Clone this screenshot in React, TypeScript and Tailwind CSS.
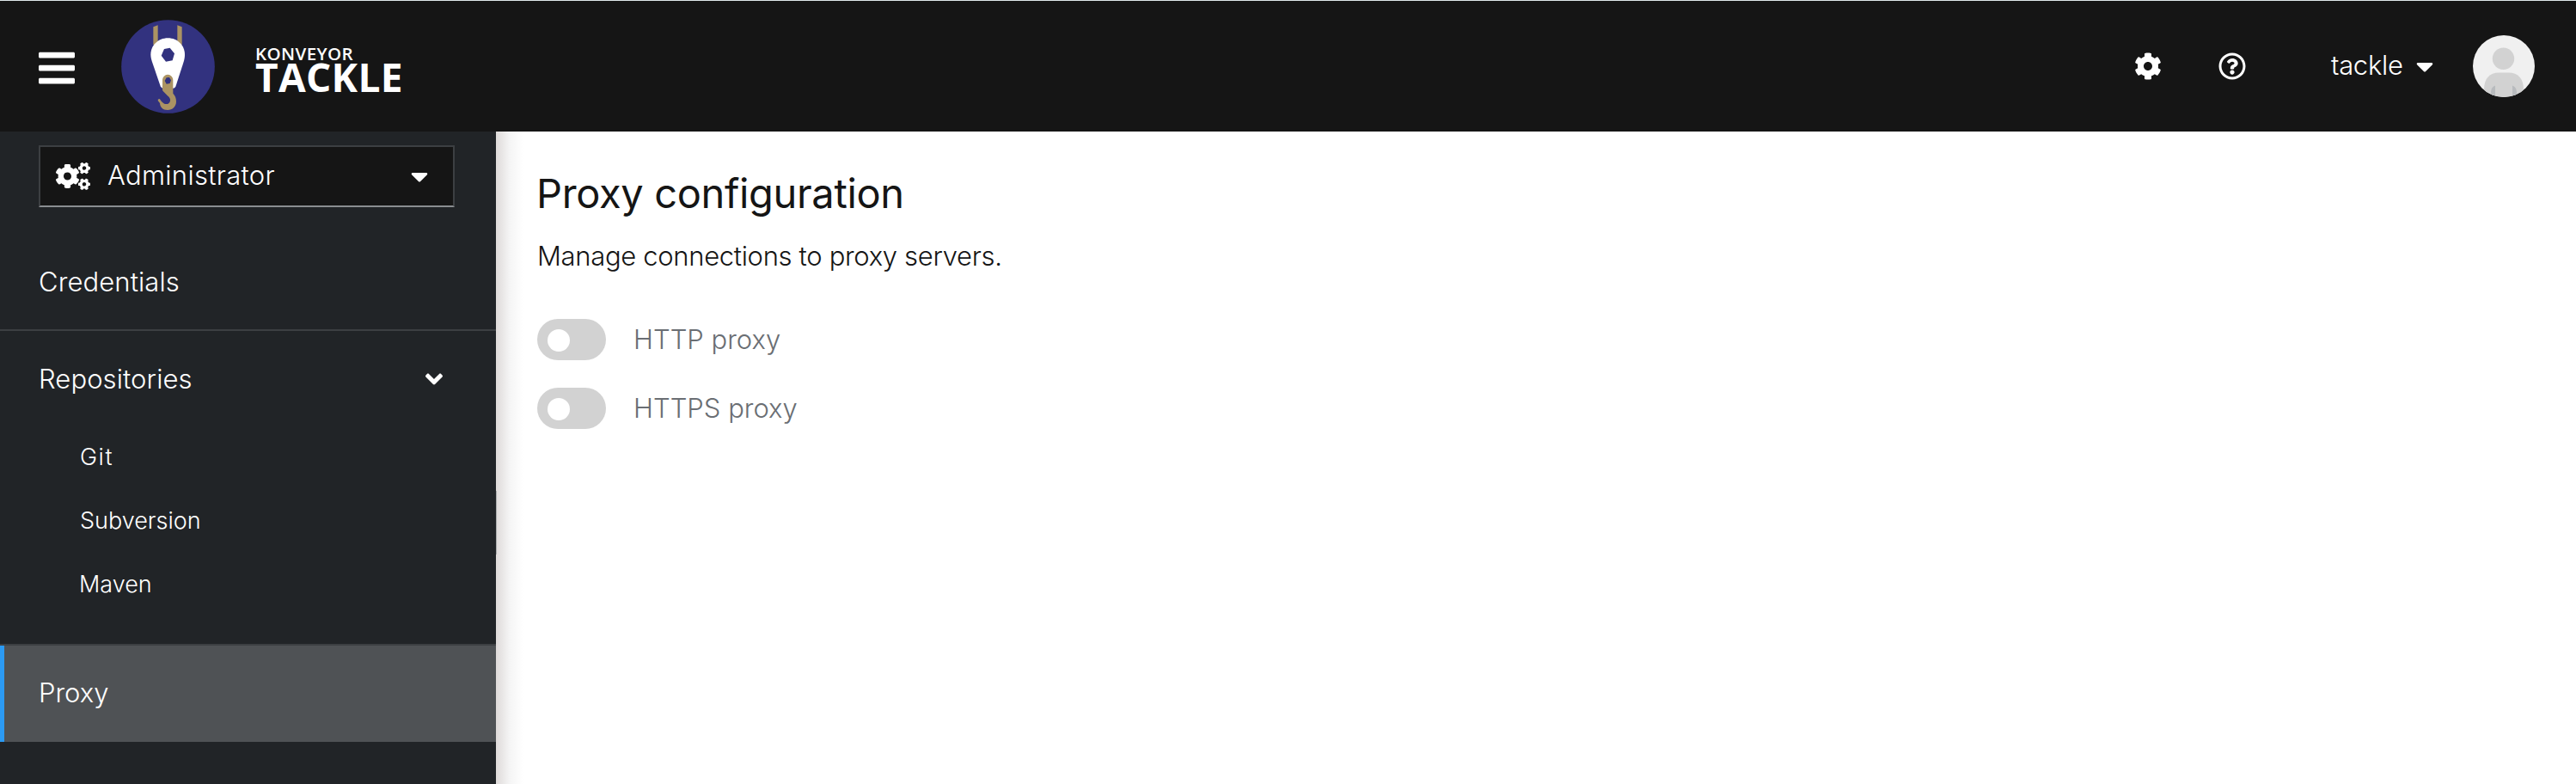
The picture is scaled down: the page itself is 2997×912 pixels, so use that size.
import { FaAngleDown, FaBars, FaCaretDown, FaCog, FaCogs, FaRegQuestionCircle } from "react-icons/fa";

function TackleLogo() {
  return (
    <svg className="h-[109px] w-[109px] shrink-0" viewBox="33 37 327 327">
      <circle cx="196.5" cy="200.5" r="163" fill="#32327f" />
      <path d="M145 62 L161 56 V125 H145 Z M229 56 L245 62 V125 H229 Z" fill="#ab9363" />
      <path
        d="M196 101 C230 101 255 127 255 159 C255 168 253 177 250 187 L223 270 Q220 276 214 276 H178 Q173 275 170 269 L143 190 C139 178 136 168 136 159 C136 127 162 101 196 101 Z"
        fill="#fff"
      />
      <path d="M183 139 L203 135 L219 155 L212 179 L189 183 L173 162 Z" fill="#32327f" />
      <path
        d="M177 247 A18.500 18.500 0 0 1 214 247 V294 C221 301 225 310 225 322 C225 340 212 352 195 352 C178 352 169 342 168 328 L161 319 Q160 313 167 313 C174 322 180 332 191 331 C200 331 205 323 204 315 C203 310 200 306 196 303 L179 286 Q177 284 177 280 Z"
        fill="#ab9363"
      />
      <path d="M191 239 L201 238 L207 248 L203 259 L191 261 L185 250 Z" fill="#32327f" />
    </svg>
  );
}

function Avatar() {
  return (
    <svg className="h-[72px] w-[72px] shrink-0" viewBox="0 0 72 72">
      <defs>
        <clipPath id="avatar-clip">
          <circle cx="36" cy="36" r="36" />
        </clipPath>
      </defs>
      <g clipPath="url(#avatar-clip)">
        <rect width="72" height="72" fill="#f0f0f0" />
        <circle cx="35.500" cy="27.300" r="12.700" fill="#d2d2d2" />
        <path d="M13 72 V63 C13 50 20 43.500 30 43.500 H42 C52 43.500 59 50 59 63 V72 Z" fill="#d2d2d2" />
        <path d="M26 58.500 Q21 60.500 21 66 V72 H26 Z M46 58.500 Q51 60.500 51 66 V72 H46 Z" fill="#b8bbbe" />
      </g>
    </svg>
  );
}

function Header() {
  return (
    <header className="flex h-[153px] shrink-0 items-center border-t border-[#dfe8ea] bg-[#151515] pl-[45px] pr-12 text-white">
      <FaBars className="mt-1 h-12 w-[42px] shrink-0" />
      <div className="ml-[54px] flex items-center">
        <TackleLogo />
        <div className="ml-[47px] flex flex-col pt-2 font-['Open_Sans',sans-serif]">
          <span className="h-4 text-[20.5px] leading-[16px] font-semibold tracking-[0.400px]">KONVEYOR</span>
          <span className="h-[39px] text-[46px] leading-[39px] font-bold tracking-[0.300px]">TACKLE</span>
        </div>
      </div>
      <div className="ml-auto flex items-center">
        <FaCog className="h-8 w-8" />
        <FaRegQuestionCircle className="ml-[66px] h-8 w-8" />
        <span className="ml-[99px] w-[86px] pb-[2px] text-[31px] leading-[48px] font-light tracking-[-0.300px]">tackle</span>
        <FaCaretDown className="ml-[13px] h-8 w-5" />
        <div className="ml-[46px]">
          <Avatar />
        </div>
      </div>
    </header>
  );
}

function Sidebar() {
  return (
    <nav className="flex w-[577px] shrink-0 flex-col bg-[#212427] text-[31px] leading-[48px] font-light text-white">
      <div className="mt-4 ml-[45px] flex h-[72px] w-[484px] items-center border-2 border-[#3c3f42] border-b-[#8a8d90] bg-[#151515] pr-[29px] pl-[18px]">
        <FaCogs className="h-8 w-10" />
        <span className="ml-5 pb-[2px] tracking-[0.300px]">Administrator</span>
        <FaCaretDown className="ml-auto h-8 w-5" />
      </div>
      <div className="mt-[30px] flex h-[114px] items-center border-b-2 border-[#3c3f42] pt-px pl-[45px]">
        <span className="tracking-[0.100px]">Credentials</span>
      </div>
      <div className="flex h-[112px] items-center justify-between pr-[62px] pl-[45px]">
        <span className="pb-px tracking-[0.090px]">Repositories</span>
        <FaAngleDown className="h-8 w-5" />
      </div>
      <ul className="flex h-[254px] flex-col border-b-2 border-[#3c3f42] text-[27px]">
        <li className="flex h-[74px] items-center pb-1 pl-[93px] tracking-[1.500px]">Git</li>
        <li className="flex h-[74px] items-center pb-1 pl-[93px]">Subversion</li>
        <li className="flex h-[74px] items-center pb-1 pl-[92px]">Maven</li>
      </ul>
      <div className="flex h-[112px] items-center border-l-[5px] border-[#2b9af3] bg-[#4f5255] pb-[2px] pl-10">
        <span>Proxy</span>
      </div>
    </nav>
  );
}

function ProxySwitch({ label }: { label: string }) {
  return (
    <label className="flex h-12 items-center">
      <span className="flex h-12 w-20 items-center rounded-full bg-[#d2d2d2] pt-[2px] pl-3">
        <span className="h-[26px] w-[26px] rounded-full bg-white" />
      </span>
      <span className="ml-8 pb-px text-[31px] leading-[48px] font-light text-[#6a6e73]">{label}</span>
    </label>
  );
}

export default function App() {
  return (
    <div className="flex h-[912px] w-full flex-col overflow-hidden bg-white font-[Inter,sans-serif]">
      <Header />
      <div className="flex min-h-0 flex-1">
        <Sidebar />
        <div className="w-8 shrink-0 bg-linear-to-r from-[#dedad9] via-[#f5f5f5] to-white">
          <div className="mt-[418px] h-[74px] w-px bg-[#a9abac]" />
        </div>
        <main className="flex flex-col pl-4">
          <h1 className="mt-[41px] -ml-px text-[47px] leading-[62px] font-normal tracking-[-0.350px] text-[#151515]">
            Proxy configuration
          </h1>
          <p className="mt-[18px] text-[31px] leading-[48px] font-light tracking-[-0.330px] text-[#151515]">
            Manage connections to proxy servers.
          </p>
          <div className="mt-[49px] flex flex-col gap-8">
            <ProxySwitch label="HTTP proxy" />
            <ProxySwitch label="HTTPS proxy" />
          </div>
        </main>
      </div>
    </div>
  );
}
